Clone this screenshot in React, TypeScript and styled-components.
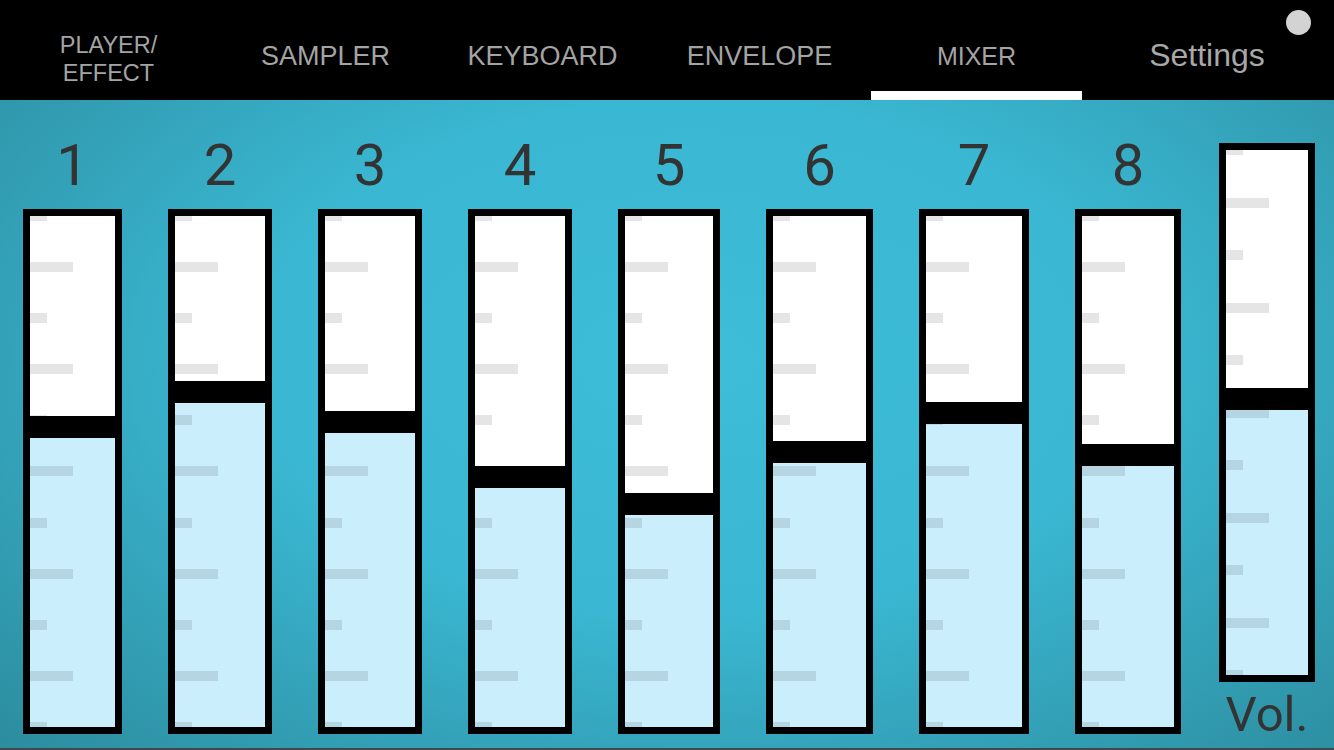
import React from 'react'
import styled, { createGlobalStyle, css } from 'styled-components'

const GlobalStyle = createGlobalStyle`
  html, body {
    margin: 0;
    padding: 0;
    background: #000;
  }
  body {
    font-family: "Liberation Sans", Arial, sans-serif;
    overflow: hidden;
  }
`

const Screen = styled.div`
  width: 1334px;
  height: 750px;
  display: flex;
  flex-direction: column;
`

const Header = styled.header`
  position: relative;
  height: 100px;
  flex-shrink: 0;
  background: #000;
  display: flex;
`

const Tab = styled.div<{ $active?: boolean; $size: number; $top: number }>`
  position: relative;
  width: 217px;
  height: 100px;
  box-sizing: border-box;
  padding-top: ${p => p.$top}px;
  display: flex;
  flex-direction: column;
  align-items: center;
  justify-content: center;
  text-align: center;
  color: #a4a4a4;
  font-size: ${p => p.$size}px;
  line-height: 27.5px;
  ${p => p.$active && css`
    &::after {
      content: '';
      position: absolute;
      left: 3px;
      right: 3px;
      bottom: 0;
      height: 9px;
      background: #fff;
    }
  `}
`

const Settings = styled.div`
  flex: 1;
  display: flex;
  align-items: center;
  justify-content: center;
  box-sizing: border-box;
  padding: 10px 5px 0 0;
  font-size: 32px;
  line-height: 32px;
  color: #a8a8a8;
`

const StatusDot = styled.span`
  position: absolute;
  top: 10px;
  right: 23px;
  width: 25px;
  height: 25px;
  border-radius: 50%;
  background: #d3d3d3;
`

const Mixer = styled.main`
  height: 650px;
  box-sizing: border-box;
  display: flex;
  align-items: flex-start;
  gap: 46px;
  padding-left: 23px;
  background: radial-gradient(ellipse 78% 95% at 52% 40%, #3dbdd8 0%, #3ab7d2 42%, #2a8596 100%);
  border-bottom: 2px solid #3c4a4e;
`

const Channel = styled.section<{ $w: number }>`
  width: ${p => p.$w}px;
  display: flex;
  flex-direction: column;
`

const ChannelNumber = styled.div`
  height: 109px;
  box-sizing: border-box;
  padding-top: 36px;
  text-align: center;
  font-family: Roboto, "Liberation Sans", sans-serif;
  font-size: 58px;
  line-height: 58px;
  color: #333;
`

const Fader = styled.div<{ $h: number }>`
  position: relative;
  height: ${p => p.$h}px;
  box-sizing: border-box;
  border: 7px solid #000;
  background: #fff;
  overflow: hidden;
  display: flex;
  flex-direction: column;
`

const Upper = styled.div<{ $h: number }>`
  height: ${p => p.$h}px;
  flex-shrink: 0;
`

const Knob = styled.div`
  position: relative;
  z-index: 2;
  height: 22px;
  flex-shrink: 0;
  background: #000;
`

const Lower = styled.div`
  flex: 1;
  background: #cbeefd;
`

const Scale = styled.div`
  position: absolute;
  z-index: 1;
  top: -5px;
  bottom: -5px;
  left: 0;
  right: 0;
  display: flex;
  flex-direction: column;
  justify-content: space-between;
  pointer-events: none;
`

const Tick = styled.span<{ $long: boolean }>`
  display: block;
  height: 10px;
  width: ${p => (p.$long ? 43 : 17)}px;
  background: rgba(0, 0, 0, 0.1);
`

const VolColumn = styled.section`
  width: 96px;
  margin-left: -8px;
  padding-top: 43px;
  display: flex;
  flex-direction: column;
`

const VolLabel = styled.div`
  margin-top: 8px;
  text-align: center;
  font-family: Roboto, "Liberation Sans", sans-serif;
  font-size: 49px;
  line-height: 49px;
  color: #333;
`

const tabs = [
  { lines: ['PLAYER/', 'EFFECT'], size: 23.5, top: 19 },
  { lines: ['SAMPLER'], size: 27, top: 13 },
  { lines: ['KEYBOARD'], size: 27, top: 13 },
  { lines: ['ENVELOPE'], size: 27, top: 13 },
  { lines: ['MIXER'], size: 25, top: 13, active: true },
]

const channels = [
  { label: '1', width: 99, level: 200 },
  { label: '2', width: 104, level: 165 },
  { label: '3', width: 104, level: 195 },
  { label: '4', width: 104, level: 250 },
  { label: '5', width: 102, level: 277 },
  { label: '6', width: 107, level: 225 },
  { label: '7', width: 110, level: 186 },
  { label: '8', width: 106, level: 228 },
]

const Slider = ({ height, level }: { height: number; level: number }) => (
  <Fader $h={height}>
    <Upper $h={level} />
    <Knob />
    <Lower />
    <Scale>
      {Array.from({ length: 11 }, (_, i) => <Tick key={i} $long={i % 2 === 1} />)}
    </Scale>
  </Fader>
)

const App = () => {
  return (
    <Screen>
      <GlobalStyle />
      <Header>
        {tabs.map(t => (
          <Tab key={t.lines.join()} $size={t.size} $top={t.top} $active={t.active}>
            {t.lines.map(l => <span key={l}>{l}</span>)}
          </Tab>
        ))}
        <Settings>Settings</Settings>
        <StatusDot />
      </Header>
      <Mixer>
        {channels.map(c => (
          <Channel key={c.label} $w={c.width}>
            <ChannelNumber>{c.label}</ChannelNumber>
            <Slider height={525} level={c.level} />
          </Channel>
        ))}
        <VolColumn>
          <Slider height={539} level={238} />
          <VolLabel>Vol.</VolLabel>
        </VolColumn>
      </Mixer>
    </Screen>
  )
}

export default App
